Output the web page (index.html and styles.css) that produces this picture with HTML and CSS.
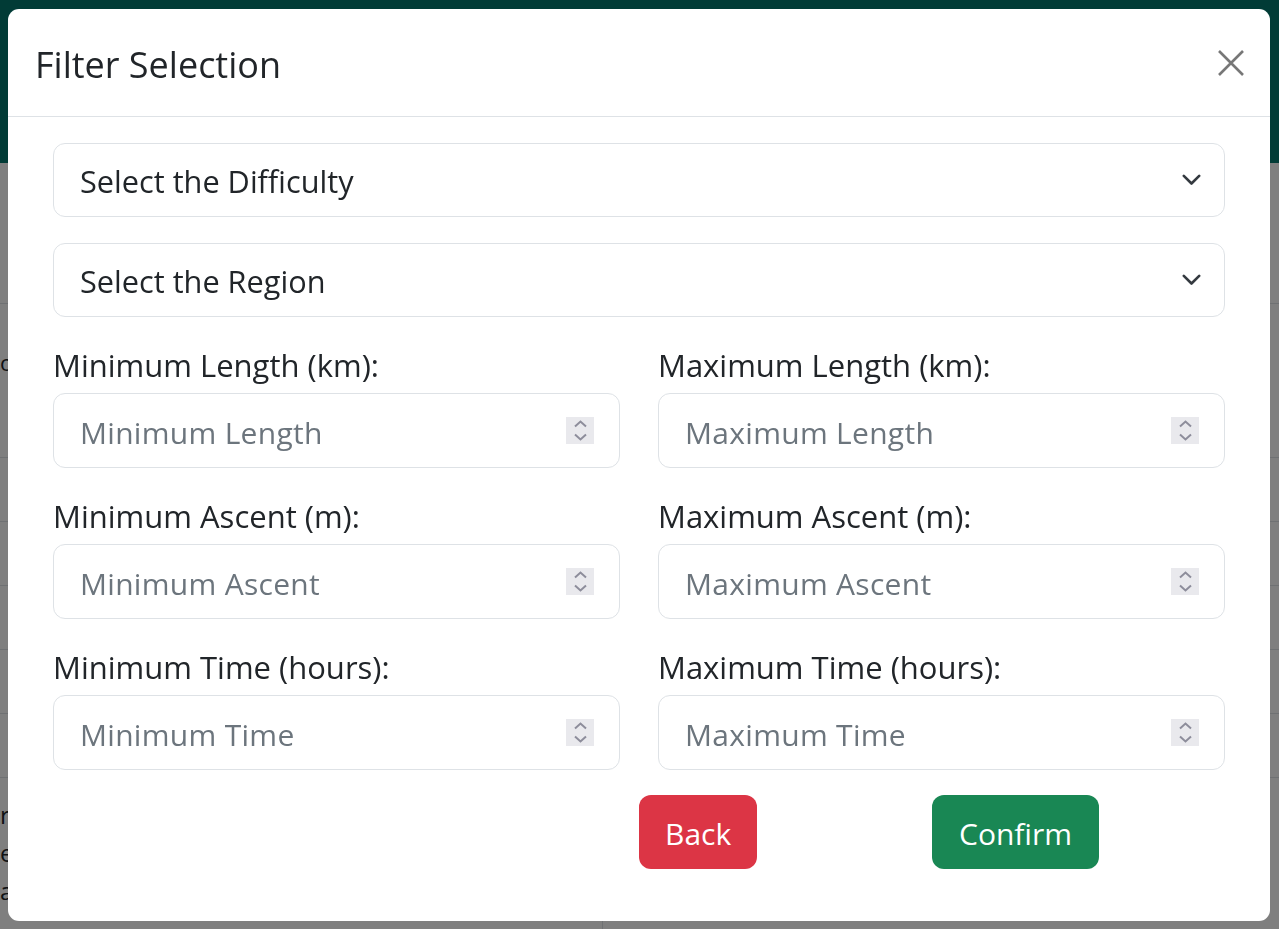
FILE: index.html
```html
<!DOCTYPE html>
<html lang="en">
<head>
<meta charset="utf-8">
<title>Filter Selection</title>
<link rel="stylesheet" href="styles.css">
</head>
<body>
<div class="page">
  <header class="topbar"></header>
  <div class="table">
    <div class="row row-head"><span class="cell-text">oc</span></div>
    <div class="row"></div>
    <div class="row"></div>
    <div class="row"></div>
    <div class="row"></div>
    <div class="row"></div>
    <div class="row row-last">
      <div class="cell cell-left">
        <span class="cell-line">r</span>
        <span class="cell-line">e</span>
        <span class="cell-line">a</span>
      </div>
      <div class="cell"></div>
    </div>
  </div>
</div>

<div class="backdrop"></div>

<div class="modal">
  <div class="modal-header">
    <h5 class="modal-title">Filter Selection</h5>
    <button class="btn-close" type="button" aria-label="Close">
      <svg width="26" height="26" viewBox="0 0 26 26"><path d="M1 1 L25 25 M25 1 L1 25" fill="none" stroke="#777" stroke-width="2.6"/></svg>
    </button>
  </div>
  <div class="modal-body">
    <div class="selects">
      <div class="select"><span>Select the Difficulty</span>
        <svg class="chev" width="19" height="12" viewBox="0 0 19 12"><path d="M1.8 1.8 L9.5 9.5 L17.2 1.8" fill="none" stroke="#343a40" stroke-width="2.6" stroke-linecap="round" stroke-linejoin="round"/></svg>
      </div>
      <div class="select"><span>Select the Region</span>
        <svg class="chev" width="19" height="12" viewBox="0 0 19 12"><path d="M1.8 1.8 L9.5 9.5 L17.2 1.8" fill="none" stroke="#343a40" stroke-width="2.6" stroke-linecap="round" stroke-linejoin="round"/></svg>
      </div>
    </div>

    <div class="fields">
      <div class="field">
        <label class="label">Minimum Length (km):</label>
        <div class="input"><input type="text" placeholder="Minimum Length"><span class="spin"><svg width="28" height="27" viewBox="0 0 28 27"><path d="M9 9.5 L14.5 4.5 L20 9.5 M9 17.5 L14.5 22.5 L20 17.5" fill="none" stroke="#8d8d9b" stroke-width="2"/></svg></span></div>
      </div>
      <div class="field">
        <label class="label">Maximum Length (km):</label>
        <div class="input"><input type="text" placeholder="Maximum Length"><span class="spin"><svg width="28" height="27" viewBox="0 0 28 27"><path d="M9 9.5 L14.5 4.5 L20 9.5 M9 17.5 L14.5 22.5 L20 17.5" fill="none" stroke="#8d8d9b" stroke-width="2"/></svg></span></div>
      </div>
      <div class="field">
        <label class="label">Minimum Ascent (m):</label>
        <div class="input"><input type="text" placeholder="Minimum Ascent"><span class="spin"><svg width="28" height="27" viewBox="0 0 28 27"><path d="M9 9.5 L14.5 4.5 L20 9.5 M9 17.5 L14.5 22.5 L20 17.5" fill="none" stroke="#8d8d9b" stroke-width="2"/></svg></span></div>
      </div>
      <div class="field">
        <label class="label">Maximum Ascent (m):</label>
        <div class="input"><input type="text" placeholder="Maximum Ascent"><span class="spin"><svg width="28" height="27" viewBox="0 0 28 27"><path d="M9 9.5 L14.5 4.5 L20 9.5 M9 17.5 L14.5 22.5 L20 17.5" fill="none" stroke="#8d8d9b" stroke-width="2"/></svg></span></div>
      </div>
      <div class="field">
        <label class="label">Minimum Time (hours):</label>
        <div class="input"><input type="text" placeholder="Minimum Time"><span class="spin"><svg width="28" height="27" viewBox="0 0 28 27"><path d="M9 9.5 L14.5 4.5 L20 9.5 M9 17.5 L14.5 22.5 L20 17.5" fill="none" stroke="#8d8d9b" stroke-width="2"/></svg></span></div>
      </div>
      <div class="field">
        <label class="label">Maximum Time (hours):</label>
        <div class="input"><input type="text" placeholder="Maximum Time"><span class="spin"><svg width="28" height="27" viewBox="0 0 28 27"><path d="M9 9.5 L14.5 4.5 L20 9.5 M9 17.5 L14.5 22.5 L20 17.5" fill="none" stroke="#8d8d9b" stroke-width="2"/></svg></span></div>
      </div>
    </div>

    <div class="actions">
      <span></span>
      <span></span>
      <button class="btn btn-back" type="button">Back</button>
      <button class="btn btn-confirm" type="button">Confirm</button>
    </div>
  </div>
</div>
</body>
</html>
```

FILE: styles.css
```css
* { box-sizing: border-box; }

html, body {
  margin: 0;
  padding: 0;
  height: 100%;
  overflow: hidden;
  font-family: "Open Sans", "Noto Sans", "Liberation Sans", sans-serif;
  color: #212529;
  background: #fff;
}

/* background page */
.page {
  width: 1279px;
  height: 929px;
}
.topbar {
  height: 163px;
  background: #02766c;
}
.table {
  margin-top: 140px;
  font-size: 30px;
}
.row {
  height: 64px;
  border-top: 1px solid #dee2e6;
}
.row-head {
  height: 154px;
  padding-top: 38px;
}
.cell-text {
  display: block;
  font-size: 22px;
  line-height: 40px;
}
.row-last {
  height: 160px;
  display: flex;
}
.cell {
  flex: 1;
}
.cell-left {
  flex: 0 0 603px;
  border-right: 1px solid #dee2e6;
  display: flex;
  flex-direction: column;
  padding-top: 18px;
  line-height: 38px;
  font-size: 24px;
}
.cell-line {
  display: block;
}

.backdrop {
  position: fixed;
  inset: 0;
  background: rgba(0, 0, 0, 0.5);
}

/* modal */
.modal {
  position: fixed;
  top: 9px;
  left: 8px;
  width: 1262px;
  background: #fff;
  border-radius: 11px;
  overflow: hidden;
}
.modal-header {
  height: 108px;
  border-bottom: 1px solid #dee2e6;
  display: flex;
  align-items: center;
  justify-content: space-between;
  padding: 0 26px 0 27px;
}
.modal-title {
  margin: 0;
  padding-top: 4px;
  font-size: 36px;
  font-weight: 400;
  line-height: 1.5;
  color: #212529;
}
.btn-close {
  border: 0;
  background: transparent;
  padding: 0;
  width: 26px;
  height: 26px;
  display: flex;
  cursor: pointer;
}

.modal-body {
  padding: 26px 45px 52px;
}

.selects {
  display: flex;
  flex-direction: column;
  gap: 26px;
}
.select {
  height: 74px;
  border: 1px solid #dee2e6;
  border-radius: 12px;
  display: flex;
  align-items: center;
  justify-content: space-between;
  padding: 2px 23px 0 26px;
  font-size: 30.7px;
  color: #212529;
}
.select .chev {
  margin-top: -2px;
}

.fields {
  display: grid;
  grid-template-columns: 1fr 1fr;
  column-gap: 38px;
}
.field {
  display: flex;
  flex-direction: column;
}
.label {
  display: block;
  margin-top: 25px;
  margin-bottom: 5px;
  font-size: 31px;
  line-height: 46px;
  color: #212529;
}
.input {
  height: 75px;
  border: 1px solid #dee2e6;
  border-radius: 12px;
  display: flex;
  align-items: center;
  padding: 0 25px 0 26px;
}
.input input {
  flex: 1;
  min-width: 0;
  border: 0;
  outline: none;
  background: transparent;
  padding: 3px 0 0;
  font-family: inherit;
  font-size: 30px;
  color: #212529;
}
.input input::placeholder {
  color: #6c757d;
  opacity: 1;
  letter-spacing: 0.3px;
}
.spin {
  display: flex;
  width: 28px;
  height: 27px;
  background: #e9e9ed;
}

.actions {
  margin-top: 25px;
  display: grid;
  grid-template-columns: repeat(4, 1fr);
}
.btn {
  justify-self: start;
  height: 74px;
  padding: 3px 27px 0;
  border: 0;
  border-radius: 12px;
  font-family: inherit;
  font-size: 30px;
  color: #fff;
  cursor: pointer;
}
.btn-back {
  background: #dc3545;
  padding: 3px 26px 0;
}
.btn-confirm { background: #198754; }
```
